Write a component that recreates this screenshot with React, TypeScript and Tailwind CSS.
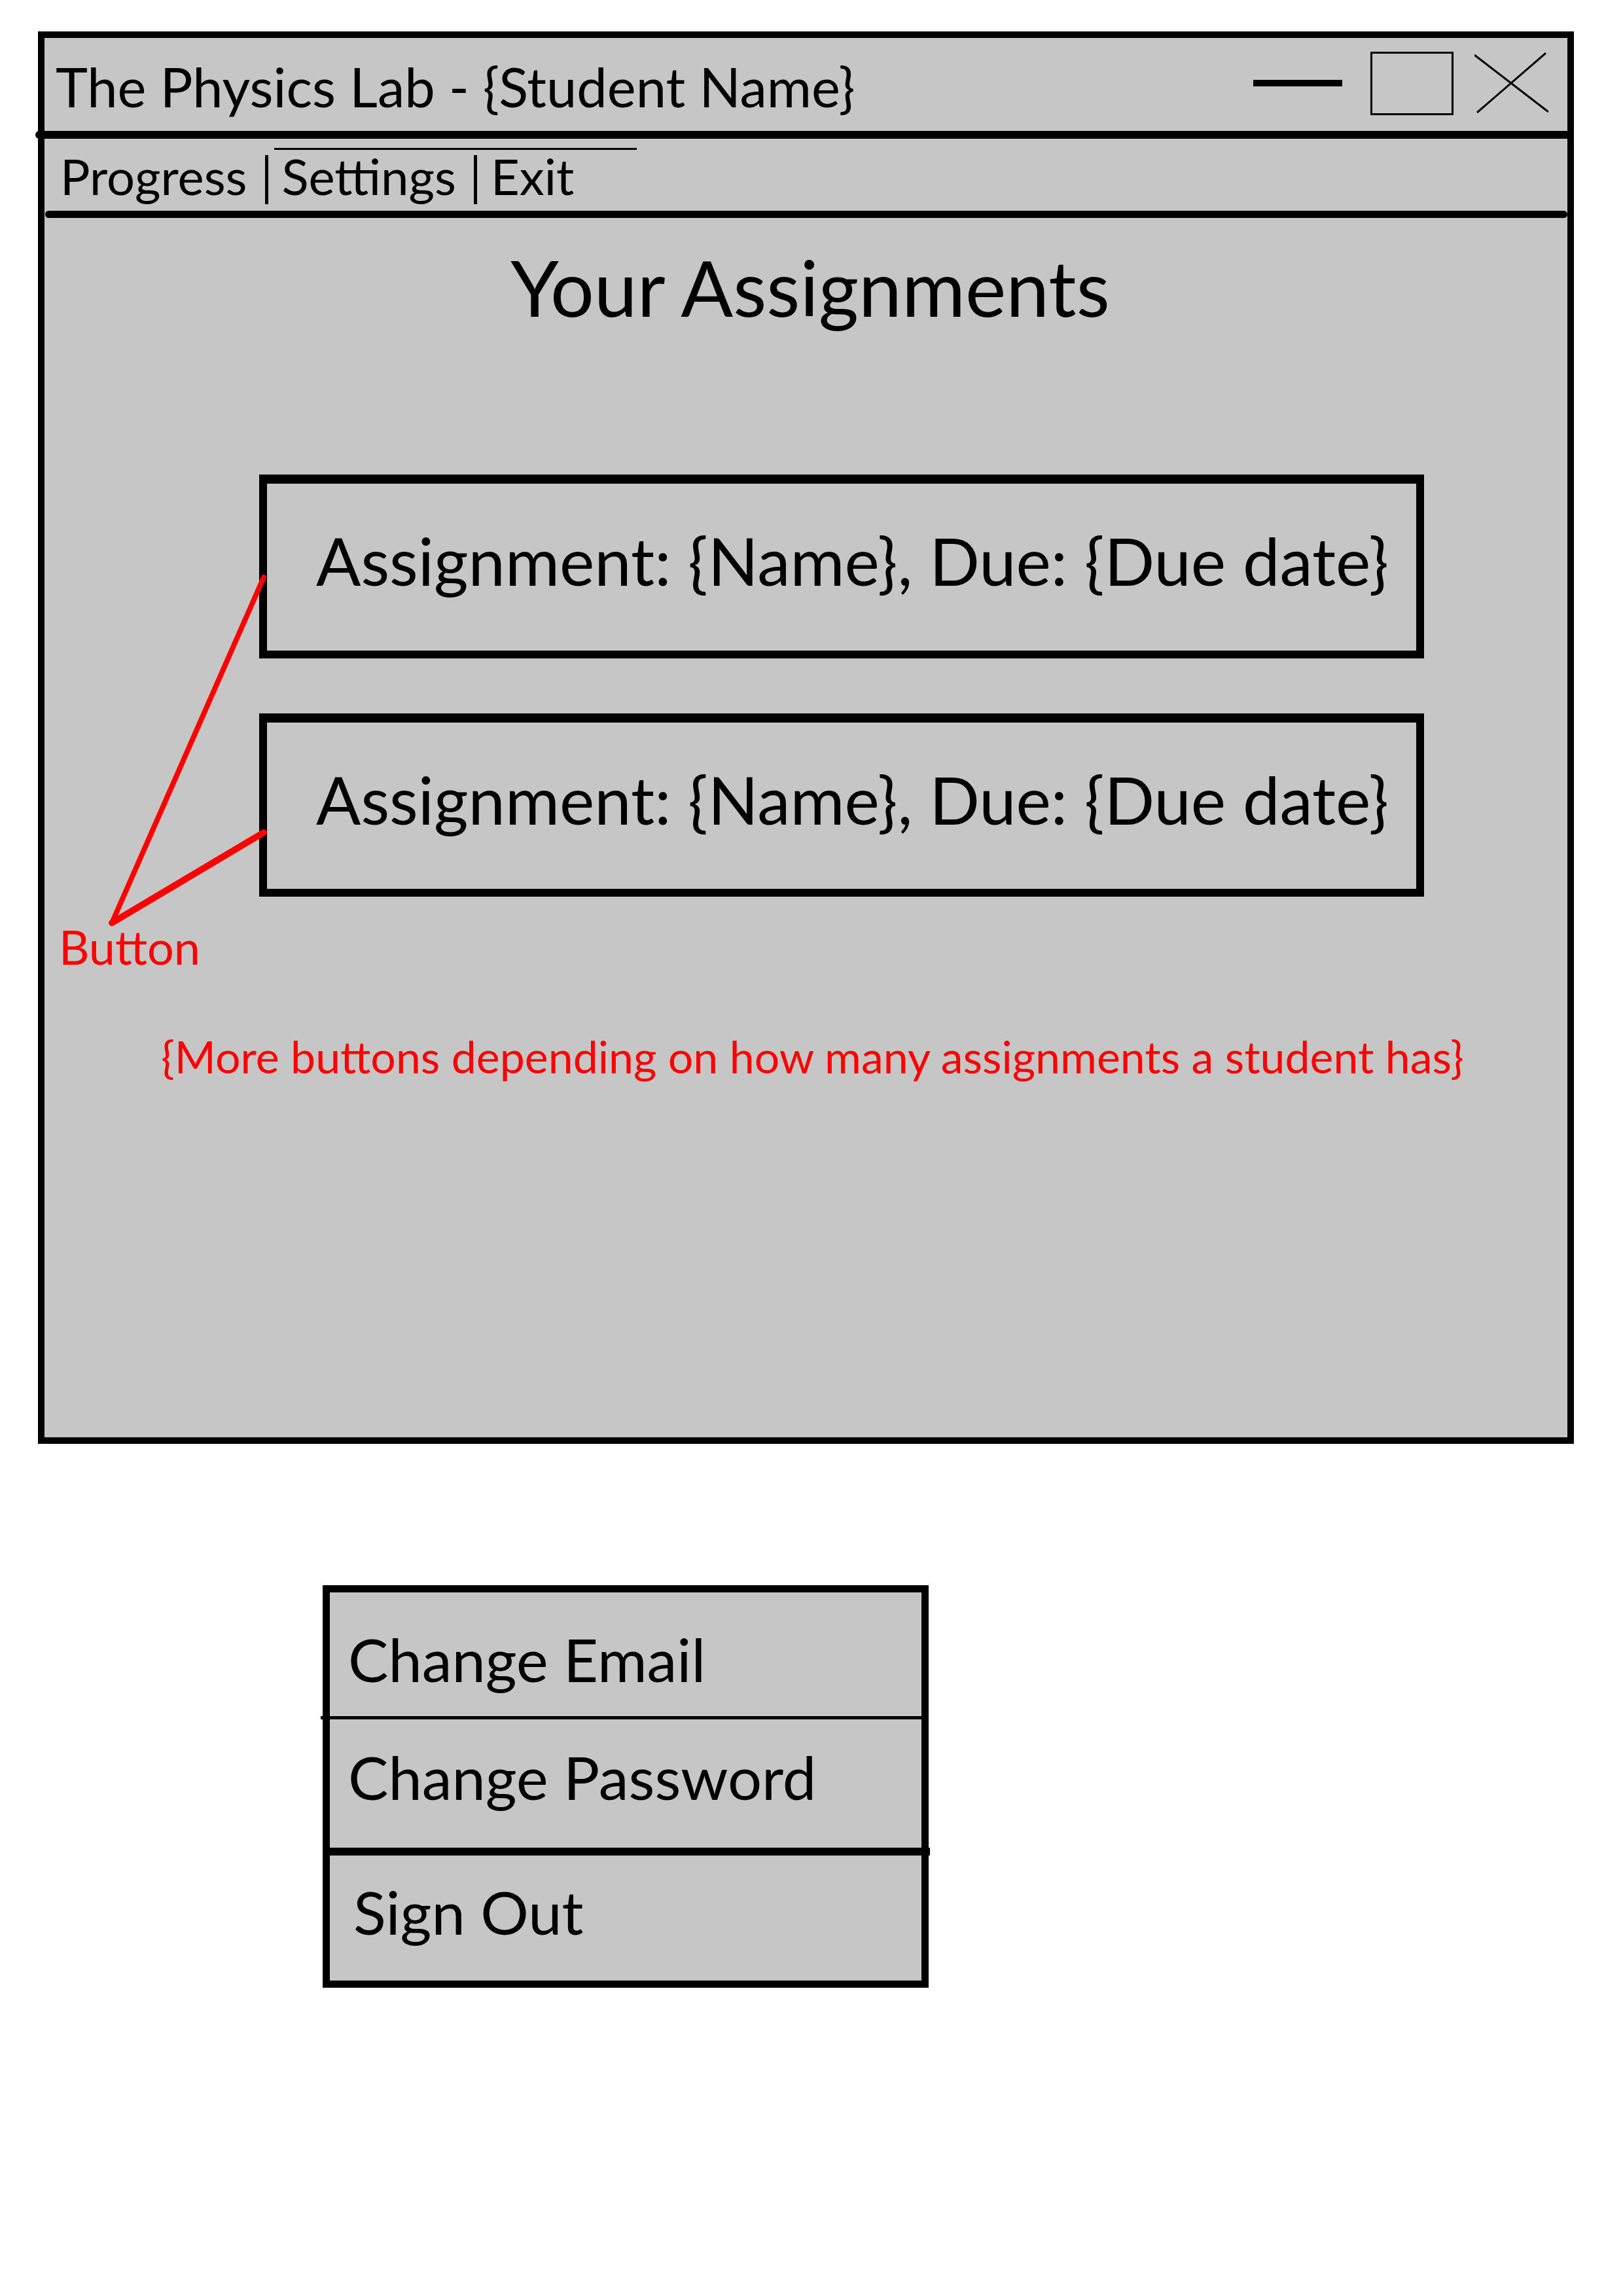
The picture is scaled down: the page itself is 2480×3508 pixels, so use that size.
const menuItems = ['Progress', 'Settings', 'Exit']

function TitleBar() {
  return (
    <div className="flex h-[142px] items-start">
      <div className="pl-[17px] pt-[33px] text-[83px] leading-none text-black">The Physics Lab - {'{Student Name}'}</div>
      <div className="ml-auto flex items-start pr-[29px]">
        <div className="mt-[64px] h-[10px] w-[136px] bg-black" />
        <div className="ml-[43px] mt-[21px] h-[97px] w-[127px] border-[3px] border-black" />
        <svg className="ml-[32px] mt-[22px]" width="113" height="93" viewBox="0 0 113 93">
          <line x1="0" y1="4" x2="113" y2="91" stroke="black" strokeWidth="3" />
          <line x1="4" y1="92" x2="109" y2="1" stroke="black" strokeWidth="3" />
        </svg>
      </div>
    </div>
  )
}

function MenuBar() {
  return (
    <div className="flex h-[110px] flex-col">
      <div className="ml-[351px] mt-[14px] h-[3px] w-[554px] bg-black" />
      <div className="mt-[2px] flex items-start pl-[24px] text-[76px] leading-none">
        {menuItems.map((item, i) => (
          <div key={item} className="flex items-start">
            {i > 0 && <div className="ml-[27px] mr-[21px] mt-[6px] h-[75px] w-[5px] bg-black" />}
            <span>{item}</span>
          </div>
        ))}
      </div>
    </div>
  )
}

function AssignmentButton({ first }: { first?: boolean }) {
  return (
    <button
      className={`ml-[328px] flex w-[1780px] items-center whitespace-nowrap border-[12px] border-t-[14px] border-black pb-[20px] pl-[75px] text-left text-[101px] leading-none ${first ? 'h-[281px]' : 'mt-[84px] h-[280px]'}`}
    >
      Assignment: {'{Name}'}, Due: {'{Due date}'}
    </button>
  )
}

function SettingsMenu() {
  return (
    <div className="ml-[493px] mt-[216px] w-[926px] border-[11px] border-black bg-[#c6c6c6] text-[92px] leading-none">
      <div className="h-[189px] pl-[28px] pt-[56px]">Change Email</div>
      <div className="-ml-[14px] h-[5px] bg-black" />
      <div className="h-[196px] pl-[28px] pt-[42px]">Change Password</div>
      <div className="-mr-[13px] h-[12px] bg-black" />
      <div className="h-[191px] pl-[36px] pt-[40px]">Sign Out</div>
    </div>
  )
}

export default function App() {
  return (
    <div className="h-[3508px] w-[2480px] overflow-hidden bg-white pt-[48px] font-['Lato',sans-serif] text-black">
      <div className="relative ml-[58px] flex h-[2158px] w-[2347px] flex-col border-[10px] border-black bg-[#c6c6c6]">
        <TitleBar />
        <div className="-ml-[14px] h-[12px] rounded-l-full bg-black" />
        <MenuBar />
        <div className="ml-[1px] h-[11px] rounded-full bg-black" />

        <h1 className="mt-[47px] pl-[13px] text-center text-[118px] font-normal leading-none">Your Assignments</h1>

        <div className="mt-[227px] flex flex-col">
          <AssignmentButton first />
          <AssignmentButton />
        </div>

        <div className="ml-[22px] mt-[40px] text-[72px] leading-none text-[#ff0000]">Button</div>
        <div className="mt-[98px] pl-[20px] text-center text-[68px] leading-none text-[#ff0000]">
          {'{More buttons depending on how many assignments a student has}'}
        </div>

        {/* annotation arrows pointing at the buttons */}
        <svg className="pointer-events-none absolute left-0 top-0" width="2327" height="2138" viewBox="0 0 2327 2138">
          <line x1="335" y1="824" x2="103" y2="1352" stroke="#ff0000" strokeWidth="8" strokeLinecap="round" />
          <line x1="335" y1="1214" x2="103" y2="1352" stroke="#ff0000" strokeWidth="10" strokeLinecap="round" />
        </svg>
      </div>

      <SettingsMenu />
    </div>
  )
}
